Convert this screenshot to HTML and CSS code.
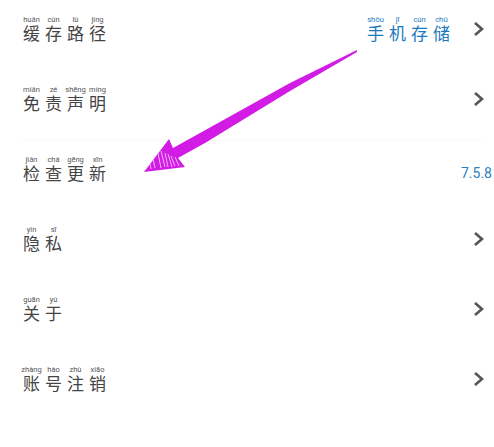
FILE: index.html
```html
<!DOCTYPE html>
<html lang="zh">
<head>
<meta charset="utf-8">
<title>设置</title>
<link rel="stylesheet" href="styles.css">
</head>
<body>
<main class="list">
  <div class="row">
    <div class="py"><span class="c"><i>huǎn</i><b>缓</b></span><span class="c"><i>cún</i><b>存</b></span><span class="c"><i>lù</i><b>路</b></span><span class="c"><i>jìng</i><b>径</b></span></div>
    <div class="py blue end"><span class="c"><i>shǒu</i><b>手</b></span><span class="c"><i>jī</i><b>机</b></span><span class="c"><i>cún</i><b>存</b></span><span class="c"><i>chǔ</i><b>储</b></span></div>
    <svg class="chev" viewBox="0 0 12 16"><path d="M2 2l7 6-7 6"/></svg>
  </div>
  <div class="row rule">
    <div class="py"><span class="c"><i>miǎn</i><b>免</b></span><span class="c"><i>zé</i><b>责</b></span><span class="c"><i>shēng</i><b>声</b></span><span class="c"><i>míng</i><b>明</b></span></div>
    <svg class="chev" viewBox="0 0 12 16"><path d="M2 2l7 6-7 6"/></svg>
  </div>
  <div class="row">
    <div class="py"><span class="c"><i>jiǎn</i><b>检</b></span><span class="c"><i>chá</i><b>查</b></span><span class="c"><i>gēng</i><b>更</b></span><span class="c"><i>xīn</i><b>新</b></span></div>
    <span class="ver">7.5.8</span>
  </div>
  <div class="row">
    <div class="py"><span class="c"><i>yǐn</i><b>隐</b></span><span class="c"><i>sī</i><b>私</b></span></div>
    <svg class="chev" viewBox="0 0 12 16"><path d="M2 2l7 6-7 6"/></svg>
  </div>
  <div class="row">
    <div class="py"><span class="c"><i>guān</i><b>关</b></span><span class="c"><i>yú</i><b>于</b></span></div>
    <svg class="chev" viewBox="0 0 12 16"><path d="M2 2l7 6-7 6"/></svg>
  </div>
  <div class="row">
    <div class="py"><span class="c"><i>zhàng</i><b>账</b></span><span class="c"><i>hào</i><b>号</b></span><span class="c"><i>zhù</i><b>注</b></span><span class="c"><i>xiāo</i><b>销</b></span></div>
    <svg class="chev" viewBox="0 0 12 16"><path d="M2 2l7 6-7 6"/></svg>
  </div>
</main>
<svg class="arrow" viewBox="0 0 494 447" aria-hidden="true">
  <path class="fill" d="M357 50 L290 83 L173 148 L169 139 L144 172 L185 167 L178 158 L205 143 L290 91 L357 52 Z"/>
  <path class="hatch" d="M158 153l3 15M161 151l4 16M165 153l3 14M168 154l4 13M171 156l4 10M175 157l4 9M153 159l2 9M150 164l1 5"/>
</svg>
</body>
</html>
```
FILE: styles.css
```css
html, body { margin: 0; padding: 0; background: #fff; }
body { width: 494px; height: 447px; overflow: hidden; position: relative; font-family: "Noto Sans CJK SC", "Noto Sans", sans-serif; }
.list { display: flex; flex-direction: column; padding: 0 9px 0 22px; }
.row { height: 70px; display: flex; align-items: center; box-sizing: border-box; padding-bottom: 12px; }
.row.rule { box-shadow: 0 1px 0 #fafafa; }
.py { display: flex; gap: 3px; margin-right: auto; color: #444; margin-top: -1px; }
.py.end { margin-left: auto; margin-right: 22px; }
.blue { color: #1b79bd; }
.c { display: flex; flex-direction: column; align-items: center; width: 19px; }
.c i { font: normal 7.5px/9px Roboto, "Noto Sans", sans-serif; white-space: nowrap; height: 9px; color: #555; }
.blue .c i { color: #1b79bd; }
.c b { font-weight: 400; font-size: 17px; line-height: 18px; }
.chev { width: 12px; height: 16px; margin-left: auto; fill: none; stroke: #555; stroke-width: 2.6; }
.py.end + .chev { margin-left: 0; }
.ver { margin-left: auto; margin-right: -7px; margin-top: 7px; font: 14px/16px Roboto, sans-serif; color: #2a80bd; }
.arrow { position: absolute; inset: 0; width: 494px; height: 447px; pointer-events: none; }
.fill { fill: #d31be6; }
.hatch { fill: none; stroke: #f3b5f8; stroke-width: 1; }
```
